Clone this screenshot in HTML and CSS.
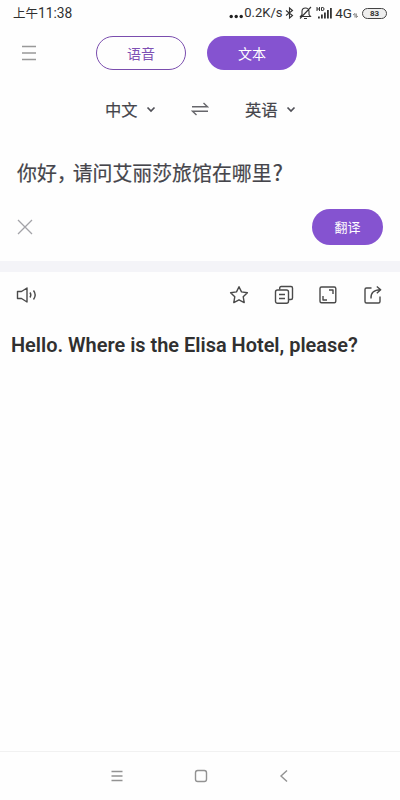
FILE: index.html
```html
<!DOCTYPE html>
<html lang="zh-CN">
<head>
<meta charset="utf-8">
<title>翻译</title>
<link rel="stylesheet" href="styles.css">
</head>
<body>
<div class="app">
  <header class="status">
    <span class="time">上午<span class="digits">11:38</span></span>
    <div class="indicators">
      <svg class="dots" width="15" height="14" viewBox="0 0 15 14" fill="#222"><circle cx="2.2" cy="9.5" r="1.7"/><circle cx="7.2" cy="9.5" r="1.7"/><circle cx="12.2" cy="9.5" r="1.7"/></svg>
      <span class="speed">0.2K/s</span>
      <svg class="bluetooth" width="9" height="14" viewBox="0 0 9 14" fill="none" stroke="#333" stroke-width="1.1"><path d="M1 4.500l6.500 5L4.500 12V2l3 2.500-6.500 5"/></svg>
      <svg class="mute" width="13" height="14" viewBox="0 0 13 14" fill="none" stroke="#333" stroke-width="1.1"><path d="M1.500 10.5h10L10 8.500V5.500a3.500 3.500 0 0 0-7 0v3zM5 12.500h3M12 1L1 12.500"/></svg>
      <svg class="signal" width="17" height="14" viewBox="0 0 17 14" fill="#333"><path d="M2 10.500h1.800V12.500H2zM5 8.500h1.800v4H5zM8 6.500h1.800v6H8zM11 4h1.800v8.500H11zM14 2h1.800v10.500H14z"/><path d="M1 1v4M3.500 1v4M1 3h2.500M5.500 1.500h1.300q1.200 0 1.200 1.500T6.800 4.500H5.500z" fill="none" stroke="#333"/></svg>
      <span class="network">4G</span>
      <svg class="data" width="5" height="5" viewBox="0 0 5 5" fill="none" stroke="#777" stroke-width=".9"><path d="M0 2L2 .5V4.500M3.300 .5V4.500L5 3"/></svg>
      <span class="battery">83</span>
    </div>
  </header>

  <nav class="modes">
    <svg class="menu" width="14" height="16" viewBox="0 0 14 16" stroke="#999" stroke-width="1.500"><path d="M0 1.500h14M0 8h14M0 14.500h14"/></svg>
    <button class="pill outline">语音</button>
    <button class="pill solid">文本</button>
  </nav>

  <div class="languages">
    <span class="lang">中文</span>
    <svg class="chevron" width="10" height="7" viewBox="0 0 10 7"><path d="M1.500 1.500L5 5l3.500-3.500"/></svg>
    <svg class="swap" width="18" height="14" viewBox="0 0 18 14"><path d="M1 4.800h15.500L12.500 1M17 9.200H1.500L5.500 13"/></svg>
    <span class="lang">英语</span>
    <svg class="chevron" width="10" height="7" viewBox="0 0 10 7"><path d="M1.500 1.500L5 5l3.500-3.500"/></svg>
  </div>

  <p class="source">你好<span class="comma">，</span>请问艾丽莎旅馆在哪里<span class="question">?</span></p>

  <div class="actions">
    <svg width="16" height="16" viewBox="0 0 16 16" stroke="#a3a3a8" stroke-width="1.300"><path d="M1 1l14 14M15 1L1 15"/></svg>
    <button class="translate">翻译</button>
  </div>

  <div class="divider"></div>

  <div class="tools">
    <svg class="speaker" width="22" height="18" viewBox="0 0 22 18"><path d="M1.500 5.500h4L11 2v14l-5.500-3.500h-4zM14 6.500q1.700 2.500 0 5M17.500 4.500q3.400 4.500 0 9"/></svg>
    <svg width="20" height="20" viewBox="0 0 20 20"><path d="M10 1.700l2.500 5.200 5.900.8-4.200 4 1 5.900L10 14.800l-5.200 2.800 1-5.900-4.200-4 5.900-.8z"/></svg>
    <svg width="20" height="20" viewBox="0 0 20 20"><path d="M5.700 4.500V3q0-1.500 1.500-1.500H17q1.500 0 1.500 1.500v10q0 1.500-1.500 1.500h-2.500"/><rect x="1.500" y="5" width="13" height="13.300" rx="2"/><path d="M5 9.500h6M5 13.500h6"/></svg>
    <svg width="20" height="20" viewBox="0 0 20 20"><rect x="2" y="2" width="15.800" height="15.800" rx="1.500"/><path d="M11 5h4v4M5 11v4h4"/></svg>
    <svg width="20" height="20" viewBox="0 0 20 20"><path d="M8.500 3h-5Q2 3 2 4.500v12Q2 18 3.500 18h12q1.500 0 1.500-1.500v-5"/><path d="M8 13.500Q7.500 5 17.500 4.800M13.800 1.500l3.900 3.300-3.900 3.400"/></svg>
  </div>

  <p class="result">Hello. Where is the Elisa Hotel, please?</p>

  <footer class="system">
    <svg width="12" height="12" viewBox="0 0 12 12"><path d="M.5 1.500h11M.5 6h11M.5 10.500h11"/></svg>
    <svg width="14" height="14" viewBox="0 0 14 14"><rect x="1.500" y="1.500" width="11" height="11" rx="2.200"/></svg>
    <svg width="12" height="14" viewBox="0 0 12 14"><path d="M9 1.500L3 7l6 5.500"/></svg>
  </footer>
</div>
</body>
</html>
```
FILE: styles.css
```css
* { box-sizing: border-box; }
body {
  margin: 0;
  background: #fefefe;
  color: #45454b;
  font-family: "Noto Sans CJK SC", sans-serif;
}
svg { display: block; flex: none; }
p { margin: 0; }
button { border: 0; padding: 0; font-family: inherit; }
.app { display: flex; flex-direction: column; width: 400px; height: 800px; }

.status {
  display: flex;
  align-items: center;
  justify-content: space-between;
  height: 26px;
  padding: 0 13px;
  color: #303030;
}
.time { display: flex; align-items: center; font-size: 12.5px; line-height: 26px; }
.digits { font: 13.8px/26px Roboto, sans-serif; }
.indicators { display: flex; align-items: center; font: 13px/26px Roboto, sans-serif; }
.dots { margin-top: 2px; }
.speed { width: 40px; white-space: nowrap; }
.bluetooth { margin-left: 1px; }
.mute { margin-left: 5px; }
.signal { margin-left: 4px; }
.network { margin-left: 2px; font-size: 13.5px; }
.data { margin: 5px 4px 0 1px; }
.battery {
  width: 25px;
  height: 11px;
  border: 1px solid #444;
  border-radius: 6px;
  background: #eee;
  font: bold 8px/9px Roboto, sans-serif;
  text-align: center;
}

.modes { display: flex; align-items: center; height: 54px; padding-left: 22px; }
.menu { margin-right: 60px; }
.pill {
  width: 90px;
  height: 34px;
  border-radius: 17px;
  font-size: 14px;
  line-height: 32px;
}
.outline { border: 1px solid #7a4dae; background: #fefefe; color: #7f50b4; }
.solid { margin-left: 21px; background: #8553d0; color: #fff; }

.languages { display: flex; align-items: center; height: 58px; padding-left: 105px; }
.lang { width: 33px; font-size: 16.3px; line-height: 24px; -webkit-text-stroke: .2px #45454b; }
.chevron { margin-left: 8px; fill: none; stroke: #505057; stroke-width: 1.7; }
.swap { margin: 0 36px 0 35px; fill: none; stroke: #66666b; stroke-width: 1.4; }

.source {
  height: 62px;
  padding: 20px 0 0 17px;
  font-size: 19.9px;
  line-height: 30px;
  white-space: nowrap;
  -webkit-text-stroke: .2px #45454b;
}
.comma { letter-spacing: -4px; }
.question { margin-left: 1px; font-size: 22px; line-height: 1; }

.actions {
  display: flex;
  align-items: center;
  justify-content: space-between;
  height: 61px;
  padding: 0 17px 8px;
}
.translate {
  width: 71px;
  height: 36px;
  border-radius: 18px;
  background: #8553d0;
  color: #fff;
  font-size: 13px;
  line-height: 36px;
}
.divider { height: 11px; background: #f4f4f8; }

.tools {
  display: flex;
  align-items: center;
  gap: 24.5px;
  height: 45px;
  padding: 0 17.5px 0 15.5px;
}
.tools svg { fill: none; stroke: #4a4a4a; stroke-width: 1.4; stroke-linejoin: round; }
.tools .speaker { margin-right: auto; }

.result {
  padding: 13px 0 0 11px;
  color: #303030;
  font: 600 19.95px/30px Roboto, sans-serif;
  white-space: nowrap;
}

.system {
  display: flex;
  align-items: center;
  justify-content: space-between;
  height: 49px;
  margin-top: auto;
  padding: 0 110px 0 111px;
  border-top: 1px solid #f1f1f1;
}
.system svg { fill: none; stroke: #929292; stroke-width: 1.4; }
```
